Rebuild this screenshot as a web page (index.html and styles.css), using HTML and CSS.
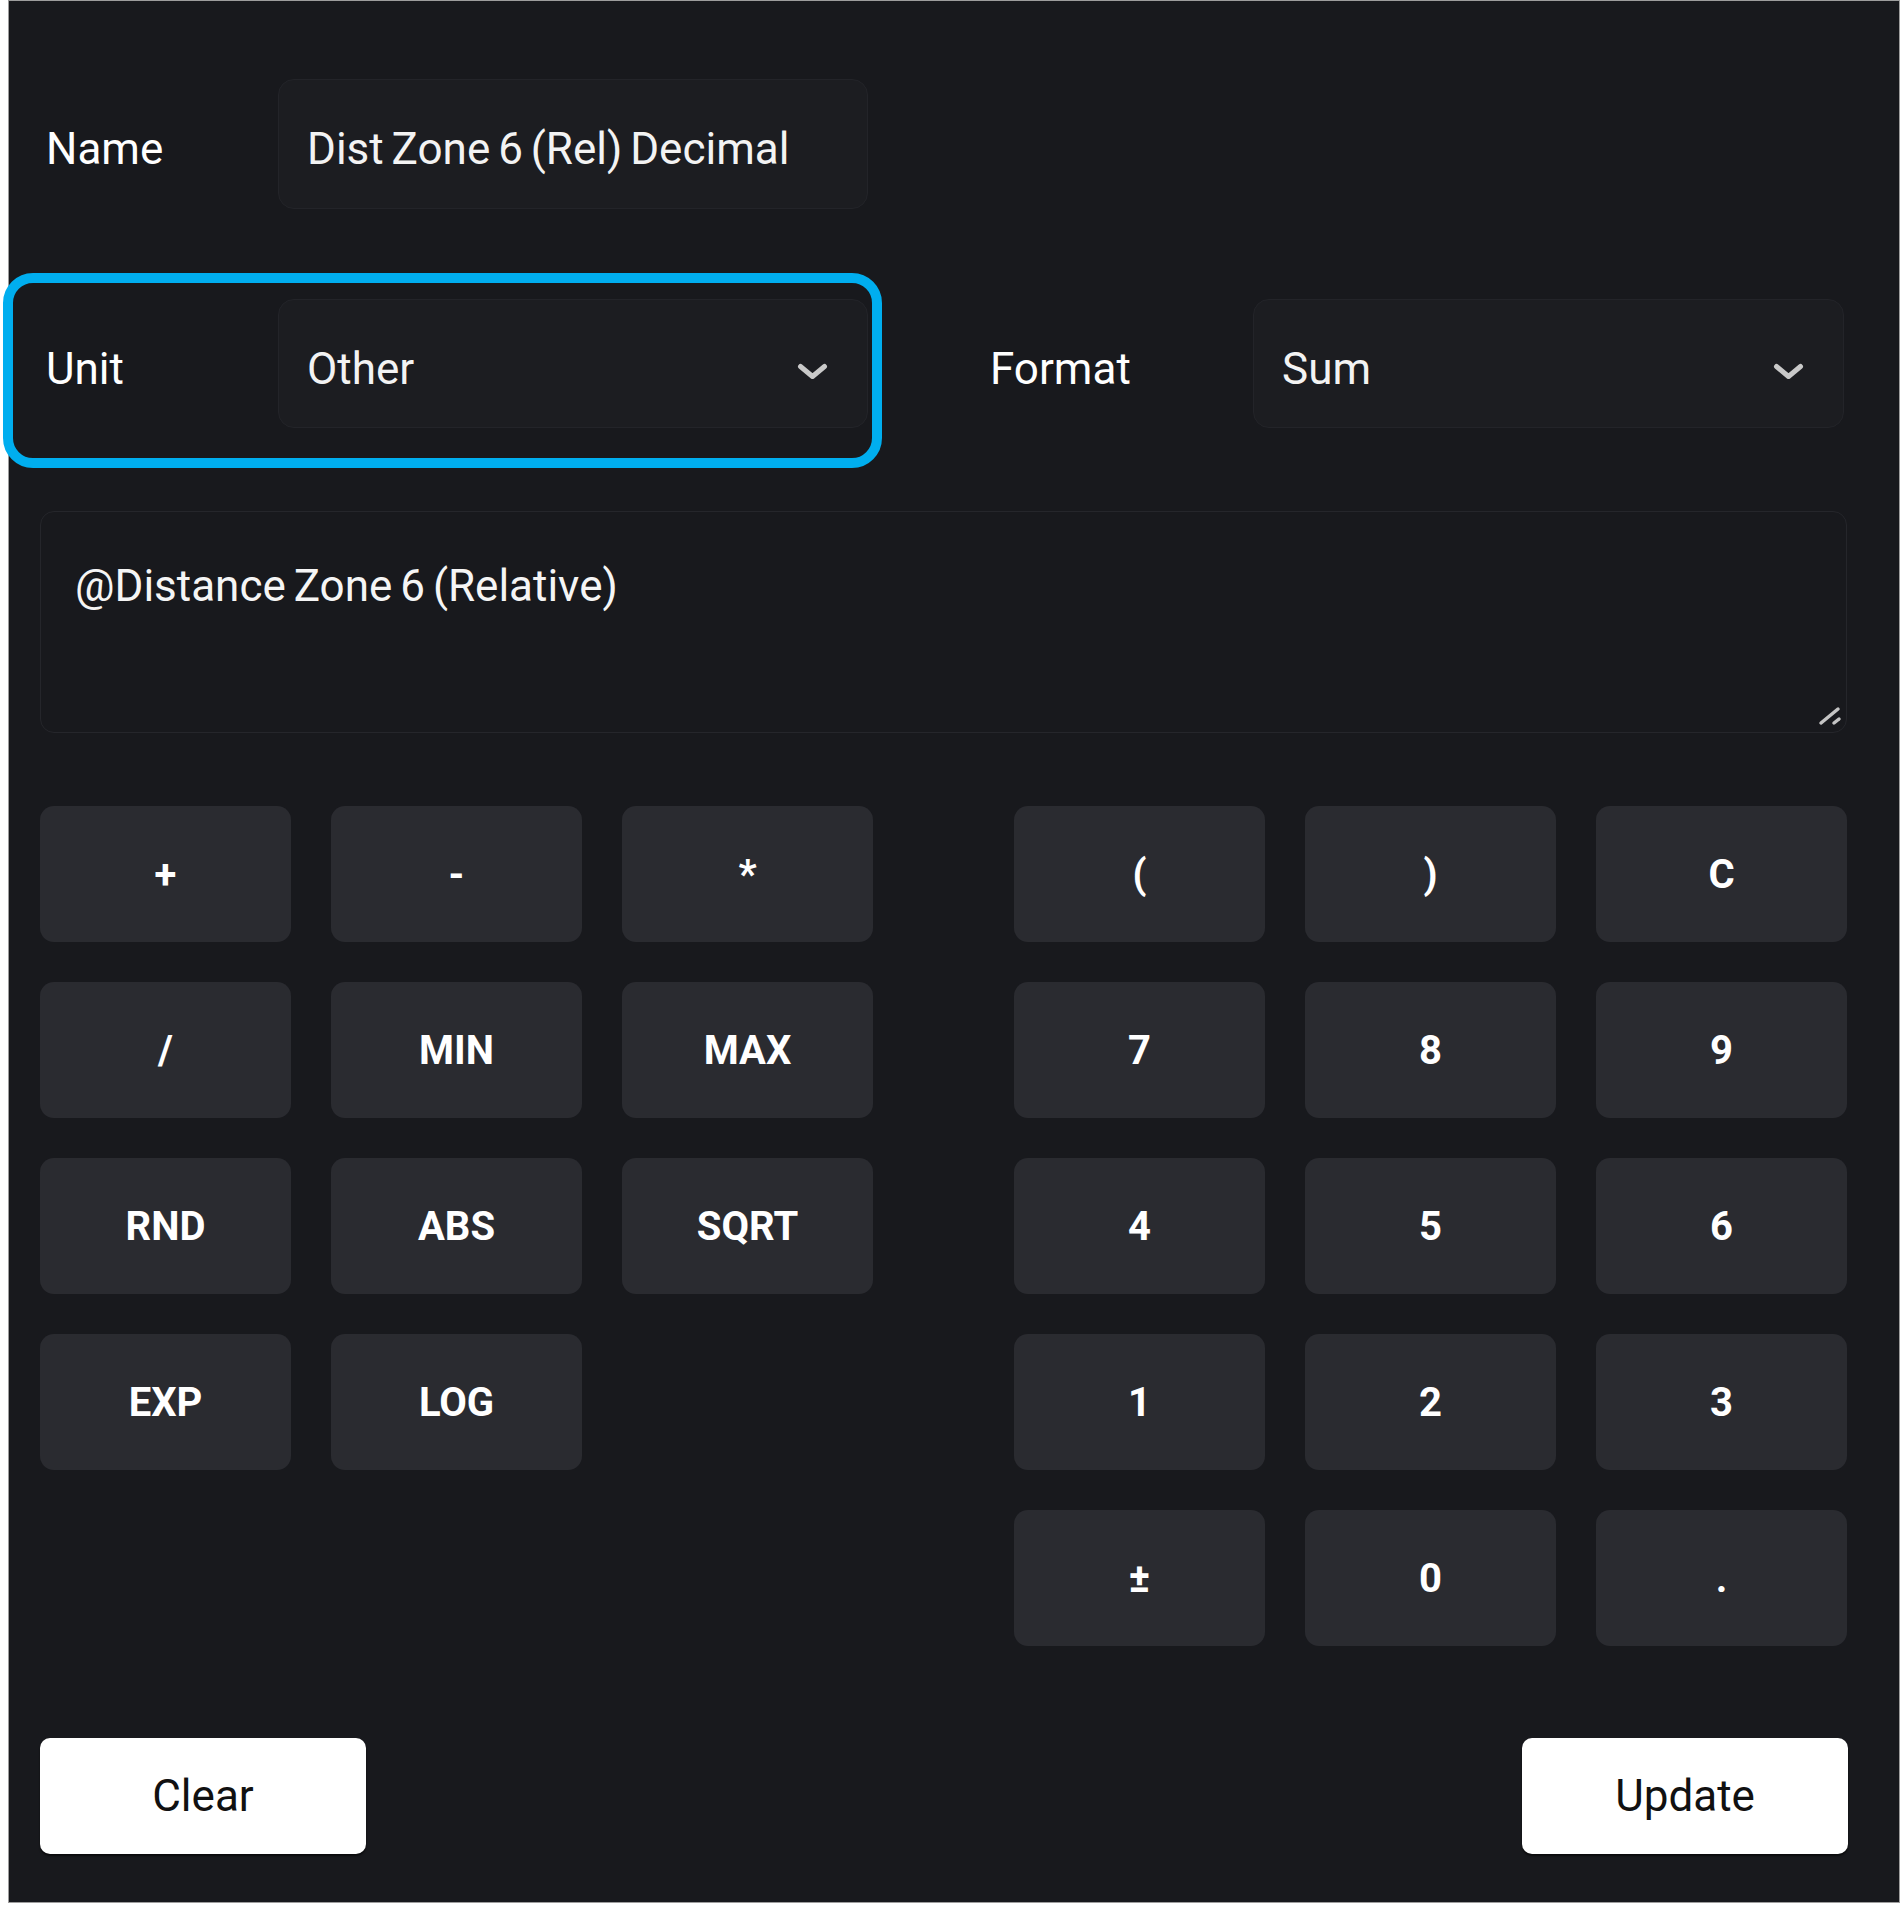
FILE: index.html
```html
<!DOCTYPE html>
<html lang="en">
<head>
<meta charset="utf-8">
<title>Formula editor</title>
<link rel="stylesheet" href="styles.css">
</head>
<body>
<div class="panel">
  <div class="form">
    <div class="row">
      <div class="label">Name</div>
      <div class="field field-name">Dist Zone 6 (Rel) Decimal</div>
    </div>
    <div class="row row-split">
      <div class="group group-unit">
        <div class="label">Unit</div>
        <div class="field select select-unit">
          <span>Other</span>
          <svg class="chev" viewBox="0 0 31 17" width="31" height="17"><polyline points="3.5,3.5 15.5,13.5 27.5,3.5" fill="none" stroke="#c9c9c9" stroke-width="5" stroke-linecap="round" stroke-linejoin="round"/></svg>
        </div>
      </div>
      <div class="group group-format">
        <div class="label label-format">Format</div>
        <div class="field select select-format">
          <span>Sum</span>
          <svg class="chev" viewBox="0 0 31 17" width="31" height="17"><polyline points="3.5,3.5 15.5,13.5 27.5,3.5" fill="none" stroke="#c9c9c9" stroke-width="5" stroke-linecap="round" stroke-linejoin="round"/></svg>
        </div>
      </div>
    </div>
  </div>

  <div class="formula-wrap">
    <textarea class="formula" spellcheck="false">@Distance Zone 6 (Relative)</textarea>
    <svg class="grip" viewBox="0 0 24 20" width="24" height="20"><line x1="3" y1="17" x2="20" y2="3" stroke="#c4c4c4" stroke-width="3.5" stroke-linecap="round"/><line x1="16" y1="17" x2="21" y2="13" stroke="#c4c4c4" stroke-width="3.5" stroke-linecap="round"/></svg>
  </div>

  <div class="keypad">
    <div class="keys">
      <button class="key">+</button>
      <button class="key">-</button>
      <button class="key">*</button>
      <button class="key">/</button>
      <button class="key">MIN</button>
      <button class="key">MAX</button>
      <button class="key">RND</button>
      <button class="key">ABS</button>
      <button class="key">SQRT</button>
      <button class="key">EXP</button>
      <button class="key">LOG</button>
    </div>
    <div class="keys">
      <button class="key">(</button>
      <button class="key">)</button>
      <button class="key">C</button>
      <button class="key">7</button>
      <button class="key">8</button>
      <button class="key">9</button>
      <button class="key">4</button>
      <button class="key">5</button>
      <button class="key">6</button>
      <button class="key">1</button>
      <button class="key">2</button>
      <button class="key">3</button>
      <button class="key">±</button>
      <button class="key">0</button>
      <button class="key">.</button>
    </div>
  </div>

  <div class="footer">
    <button class="action">Clear</button>
    <button class="action">Update</button>
  </div>
</div>
</body>
</html>
```

FILE: styles.css
```css
html, body {
  margin: 0;
  padding: 0;
  background: #ffffff;
}

body {
  font-family: Roboto, "Liberation Sans", sans-serif;
  height: 1906px;
  overflow: hidden;
}

.panel {
  margin-left: 8px;
  width: 1892px;
  height: 1903px;
  box-sizing: border-box;
  border: 1px solid #9d9d9d;
  background: #18191d;
  padding: 78px 52px 0 31px;
  display: flex;
  flex-direction: column;
}

.row {
  display: flex;
  height: 130px;
}

.row-split {
  margin-top: 90px;
  height: 129px;
  justify-content: space-between;
  margin-right: 3px;
}

.group {
  display: flex;
  height: 100%;
}

.group-unit {
  position: relative;
  width: 828px;
}

.group-unit::before {
  content: "";
  position: absolute;
  left: -37px;
  top: -26px;
  right: -14px;
  bottom: -40px;
  border: 10px solid #00aeef;
  border-radius: 30px;
  pointer-events: none;
}

.group-format {
  width: 860px;
}

.label {
  width: 238px;
  flex: none;
  box-sizing: border-box;
  padding: 10px 0 0 6px;
  display: flex;
  align-items: center;
  font-size: 44px;
  color: #ffffff;
}

.label-format {
  width: 269px;
}

.field {
  flex: 1;
  box-sizing: border-box;
  height: 100%;
  background: #1c1d21;
  border: 1px solid #232429;
  border-radius: 16px;
  padding: 10px 28px 0 28px;
  display: flex;
  align-items: center;
  font-size: 44px;
  word-spacing: -3px;
  color: #f3f3f3;
  white-space: nowrap;
}

.field-name {
  flex: none;
  width: 590px;
}

.select {
  justify-content: space-between;
  padding-right: 39px;
}

.chev {
  display: block;
  margin-top: 6px;
}

.formula-wrap {
  position: relative;
  margin-top: 83px;
}

.formula {
  display: block;
  margin: 0;
  width: 1807px;
  height: 222px;
  box-sizing: border-box;
  background: #18191d;
  border: 1px solid #25262b;
  border-radius: 14px;
  padding: 48px 34px;
  font-family: Roboto, "Liberation Sans", sans-serif;
  font-size: 44px;
  word-spacing: -3px;
  color: #f5f5f5;
  resize: none;
  outline: none;
  color-scheme: dark;
}

.grip {
  position: absolute;
  right: 5px;
  bottom: 7px;
  display: block;
}

.keypad {
  margin-top: 73px;
  display: flex;
  justify-content: space-between;
}

.keys {
  display: grid;
  grid-template-columns: repeat(3, 251px);
  grid-auto-rows: 136px;
  gap: 40px;
  align-content: start;
}

.key {
  border: none;
  border-radius: 14px;
  background: #2a2b30;
  color: #ffffff;
  font-family: Roboto, "Liberation Sans", sans-serif;
  font-weight: 700;
  font-size: 40px;
  display: flex;
  align-items: center;
  justify-content: center;
  padding: 0;
}

.footer {
  margin-top: 92px;
  display: flex;
  justify-content: space-between;
  margin-right: -1px;
}

.action {
  width: 326px;
  height: 116px;
  border: none;
  border-radius: 10px;
  background: #ffffff;
  color: #111111;
  font-family: Roboto, "Liberation Sans", sans-serif;
  font-size: 44px;
  box-shadow: 0 2px 2px rgba(0, 0, 0, 0.6);
  padding: 0;
}
```
